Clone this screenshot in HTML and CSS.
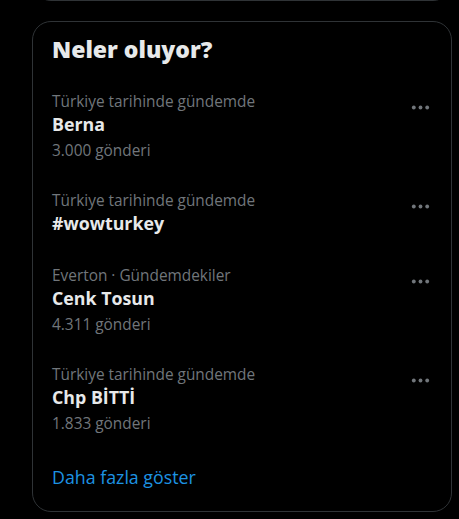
FILE: index.html
```html
<!DOCTYPE html>
<html lang="tr">
<head>
<meta charset="utf-8">
<link rel="stylesheet" href="styles.css">
</head>
<body>
<div class="page">
  <div class="prev-card"></div>
  <section class="card">
    <h2 class="title">Neler oluyor?</h2>
    <div class="trend">
      <div class="trend-body">
        <div class="meta">Türkiye tarihinde gündemde</div>
        <div class="name">Berna</div>
        <div class="count">3.000 gönderi</div>
      </div>
      <button class="more" aria-label="Daha fazla">
        <svg viewBox="0 0 24 24" width="23" height="23"><circle cx="5" cy="12" r="2"/><circle cx="12" cy="12" r="2"/><circle cx="19" cy="12" r="2"/></svg>
      </button>
    </div>
    <div class="trend">
      <div class="trend-body">
        <div class="meta">Türkiye tarihinde gündemde</div>
        <div class="name">#wowturkey</div>
      </div>
      <button class="more" aria-label="Daha fazla">
        <svg viewBox="0 0 24 24" width="23" height="23"><circle cx="5" cy="12" r="2"/><circle cx="12" cy="12" r="2"/><circle cx="19" cy="12" r="2"/></svg>
      </button>
    </div>
    <div class="trend">
      <div class="trend-body">
        <div class="meta">Everton · Gündemdekiler</div>
        <div class="name">Cenk Tosun</div>
        <div class="count">4.311 gönderi</div>
      </div>
      <button class="more" aria-label="Daha fazla">
        <svg viewBox="0 0 24 24" width="23" height="23"><circle cx="5" cy="12" r="2"/><circle cx="12" cy="12" r="2"/><circle cx="19" cy="12" r="2"/></svg>
      </button>
    </div>
    <div class="trend">
      <div class="trend-body">
        <div class="meta">Türkiye tarihinde gündemde</div>
        <div class="name">Chp BİTTİ</div>
        <div class="count">1.833 gönderi</div>
      </div>
      <button class="more" aria-label="Daha fazla">
        <svg viewBox="0 0 24 24" width="23" height="23"><circle cx="5" cy="12" r="2"/><circle cx="12" cy="12" r="2"/><circle cx="19" cy="12" r="2"/></svg>
      </button>
    </div>
    <a class="show-more" href="#">Daha fazla göster</a>
  </section>
</div>
</body>
</html>
```
FILE: styles.css
```css
* { box-sizing: border-box; }
html, body {
  margin: 0;
  background: #000;
}
body {
  font-family: "Open Sans", "Noto Sans", sans-serif;
  color: #e7e9ea;
  overflow: hidden;
}
.page {
  padding: 0 7px 0 32px;
  width: 459px;
}
.prev-card {
  height: 40px;
  margin-top: -39px;
  border: 1px solid #2f3336;
  border-radius: 19px;
}
.card {
  margin-top: 20px;
  width: 420px;
  border: 1px solid #2f3336;
  border-radius: 19px;
  overflow: hidden;
}
.title {
  margin: 0;
  padding: 13px 19px 13px;
  font-size: 23px;
  line-height: 29px;
  font-weight: 800;
  color: #e7e9ea;
}
.trend {
  display: flex;
  justify-content: space-between;
  align-items: flex-start;
  padding: 15px 19px 16px 19px;
}
.trend-body {
  display: flex;
  flex-direction: column;
}
.meta, .count {
  font-size: 15.4px;
  line-height: 19px;
  color: #71767b;
}
.name {
  font-size: 17.8px;
  line-height: 24px;
  font-weight: 700;
  color: #e7e9ea;
  margin-top: 1px;
}
.count {
  margin-top: 5px;
}
.more {
  background: none;
  border: 0;
  padding: 0;
  margin: 4px 0 0 0;
  width: 23px;
  height: 23px;
  display: flex;
}
.more svg { fill: #71767b; }
.show-more {
  display: block;
  padding: 16px 19px 22px;
  font-size: 17.8px;
  line-height: 24px;
  color: #1d93e3;
  text-decoration: none;
}
```
